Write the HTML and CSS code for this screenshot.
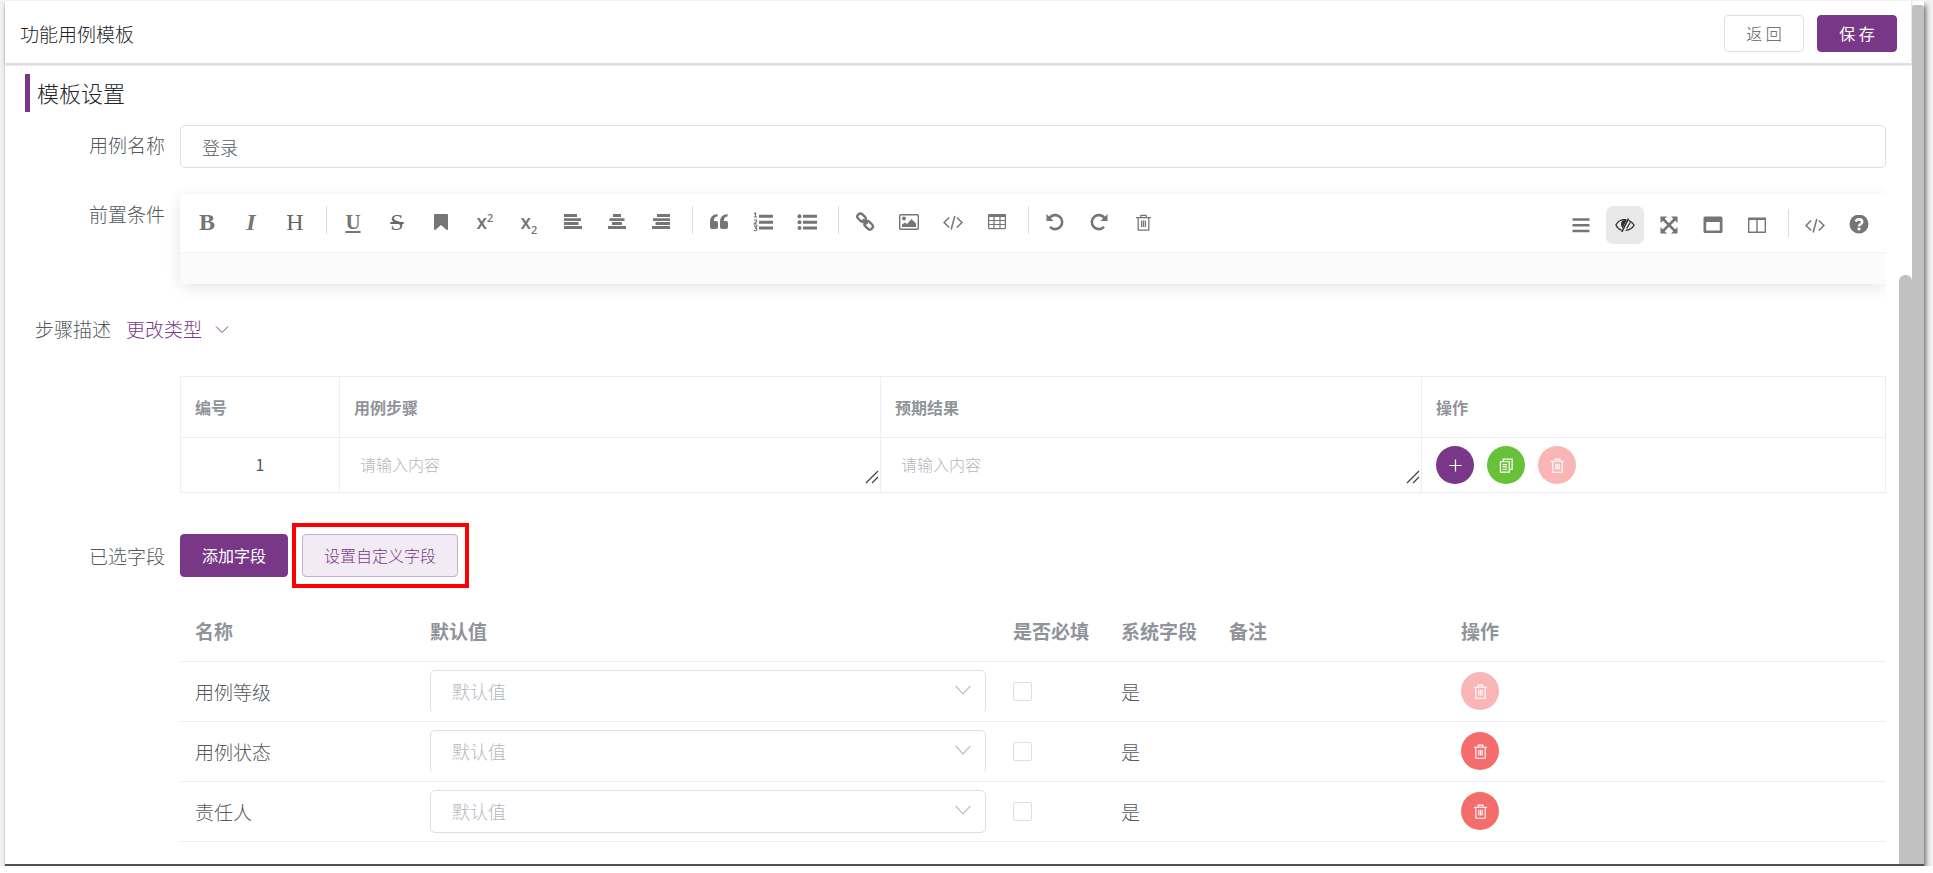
FILE: index.html
```html
<!DOCTYPE html>
<html lang="zh-CN">
<head>
<meta charset="utf-8">
<title>功能用例模板</title>
<link rel="stylesheet" href="styles.css">
</head>
<body>
<svg class="defs" aria-hidden="true">
  <symbol id="trash" viewBox="0 0 16 16"><path d="M1 3.500h14M5.500 3.500V1.200h5v2.300M3 3.500v11.700h10V3.500M6.200 6v6.200M8 6v6.200M9.800 6v6.200" fill="none" stroke="currentColor" stroke-width="1.200"/></symbol>
  <symbol id="chevron" viewBox="0 0 16 16"><path d="M1.500 4.500 8 11.500l6.500-7" fill="none" stroke="currentColor" stroke-width="1.200"/></symbol>
  <symbol id="chevron-flat" viewBox="0 0 16 16"><path d="M2 5.500 8 11.500l6-6" fill="none" stroke="currentColor" stroke-width="1"/></symbol>
  <symbol id="code" viewBox="0 0 20 20"><path d="M6.200 5.500 1 10.500l5.200 5M13.800 5.500l5.200 5-5.200 5M11.800 4 8.200 17.500" fill="none" stroke="currentColor" stroke-width="1.500"/></symbol>
  <symbol id="grip" viewBox="0 0 14 14"><path d="M1 13 13 1M7 13l6-6" fill="none" stroke="currentColor" stroke-width="1.300"/></symbol>
</svg>
<div class="window">
  <main class="page">
    <header class="topbar">
      <h1 class="topbar-title">功能用例模板</h1>
      <div class="topbar-actions">
        <button class="btn btn-plain btn-small" type="button">返 回</button>
        <button class="btn btn-primary btn-small" type="button">保 存</button>
      </div>
    </header>
    <div class="body">
      <form class="content">
        <h2 class="section-title">模板设置</h2>

        <div class="row">
          <label class="label" for="case-name">用例名称</label>
          <input class="text-input" id="case-name" type="text" value="登录">
        </div>

        <div class="row">
          <span class="label">前置条件</span>
          <div class="editor">
            <div class="toolbar">
              <div class="tools">
                <button class="tool glyph bold" type="button">B</button>
                <button class="tool glyph italic" type="button">I</button>
                <button class="tool glyph" type="button">H</button>
                <span class="divider"></span>
                <button class="tool glyph under" type="button">U</button>
                <button class="tool glyph strike" type="button">S</button>
                <button class="tool" type="button" aria-label="标记"><svg viewBox="0 0 20 20"><path d="M3 3q0-1 1-1h12q1 0 1 1v15l-1.500-.2L10 13l-5.500 4.800L3 18z" fill="currentColor"/></svg></button>
                <button class="tool script" type="button"><span>x<sup>2</sup></span></button>
                <button class="tool script" type="button"><span>x<sub>2</sub></span></button>
                <button class="tool" type="button" aria-label="左对齐"><svg viewBox="0 0 20 20"><path d="M1 3.500h13M1 7.700h17M1 11.500h14.500M1 15.500h18" stroke="currentColor" stroke-width="2.800"/></svg></button>
                <button class="tool" type="button" aria-label="居中"><svg viewBox="0 0 20 20"><path d="M6 3.500h8M2.500 7.700h15M5 11.500h10M1 15.500h18" stroke="currentColor" stroke-width="2.800"/></svg></button>
                <button class="tool" type="button" aria-label="右对齐"><svg viewBox="0 0 20 20"><path d="M6 3.500h13M2 7.700h17M4.500 11.500H19M1 15.500h18" stroke="currentColor" stroke-width="2.800"/></svg></button>
                <span class="divider"></span>
                <button class="tool" type="button" aria-label="引用"><svg viewBox="0 0 20 20"><path id="q" d="M8.500 2v2.500Q5 4.500 4.800 9H7q2 0 2 2v4q0 2-2 2H3q-2 0-2-2v-5Q1 2.500 8.500 2z" fill="currentColor"/><use href="#q" x="10"/></svg></button>
                <button class="tool" type="button" aria-label="有序列表"><svg viewBox="0 0 20 20"><path d="M6 4.200h14M6 10.200h14M6 16h14" stroke="currentColor" stroke-width="3"/><path d="M1 1.800 2.500 1v4M1 5h3M1 8h2.500v1.500L1 12h3M1 14.200h3l-1.500 2q2 .3 1 1.800-.8 1-2.500.4" fill="none" stroke="currentColor" stroke-width="1.200"/></svg></button>
                <button class="tool" type="button" aria-label="无序列表"><svg viewBox="0 0 20 20"><path d="M6 4.200h14M6 10.200h14M6 16h14" stroke="currentColor" stroke-width="3"/><g fill="currentColor"><circle cx="2.500" cy="4.200" r="2"/><circle cx="2.500" cy="10.200" r="2"/><circle cx="2.500" cy="16" r="2"/></g></svg></button>
                <span class="divider"></span>
                <button class="tool" type="button" aria-label="链接"><svg viewBox="0 0 20 20"><g fill="none" stroke="currentColor" stroke-width="2.400"><rect x="2" y="2.600" width="9" height="6" rx="2.800" transform="rotate(45 6.500 5.600)"/><rect x="9.200" y="10.400" width="9" height="6" rx="2.800" transform="rotate(45 13.700 13.400)"/><path d="m7.500 7.500 5 4.500"/></g></svg></button>
                <button class="tool" type="button" aria-label="图片"><svg viewBox="0 0 20 20"><rect x=".7" y="2.700" width="18.600" height="14.600" rx="1" fill="none" stroke="currentColor" stroke-width="1.400"/><circle cx="5" cy="6.500" r="1.900" fill="currentColor"/><path d="M3 15v-2.500l3-2 2 1.500 4.500-5 4.500 4.500V15z" fill="currentColor"/></svg></button>
                <button class="tool" type="button" aria-label="代码"><svg><use href="#code"/></svg></button>
                <button class="tool" type="button" aria-label="表格"><svg viewBox="0 0 20 20"><rect x="1.600" y="2.700" width="16.800" height="14" rx="1" fill="none" stroke="currentColor" stroke-width="1.300"/><path d="M1 2.500h18V5H1z" fill="currentColor"/><path d="M1.500 8.500h17M1.500 12.500h17M7 4v12.500M13 4v12.500" stroke="currentColor" stroke-width="1.200"/></svg></button>
                <span class="divider"></span>
                <button class="tool" type="button" aria-label="撤销"><svg viewBox="0 0 20 20"><path d="M4.500 6A7 7 0 1 1 5 14.800" fill="none" stroke="currentColor" stroke-width="2.600"/><path d="M1.500 2v7h7z" fill="currentColor"/></svg></button>
                <button class="tool" type="button" aria-label="重做"><svg viewBox="0 0 20 20"><path d="M15.500 6A7 7 0 1 0 15 14.800" fill="none" stroke="currentColor" stroke-width="2.600"/><path d="M18.500 2v7h-7z" fill="currentColor"/></svg></button>
                <button class="tool" type="button" aria-label="清空"><svg class="i16"><use href="#trash"/></svg></button>
              </div>
              <div class="tools tools-right">
                <button class="tool" type="button" aria-label="目录"><svg viewBox="0 0 20 20"><path d="M1.500 4.500h17M1.500 10.200h17M1.500 16h17" stroke="currentColor" stroke-width="2.600"/></svg></button>
                <button class="tool active" type="button" aria-label="预览"><svg viewBox="0 0 20 20"><path d="M11 4.700Q4 4 .9 10q2 4 5.500 5.200M13.500 5.300Q17 6.500 19.100 10q-2.600 5-8.500 5.300M15.300 7.500l-3.600 6" fill="none" stroke="currentColor" stroke-width="1.300"/><path d="M13.500 3.500 6.800 17" stroke="currentColor" stroke-width="1.600"/><path d="M12 4.500 7.500 13.500Q4.500 9 7.500 5.500z" fill="currentColor"/></svg></button>
                <button class="tool" type="button" aria-label="全屏"><svg viewBox="0 0 20 20"><path d="m4 4 12 12M16 4 4 16" stroke="currentColor" stroke-width="2.600"/><path d="M1.500 1.500H8l-6.500 6.500zM18.500 1.500V8L12 1.500zM1.500 18.500V12L8 18.500zM18.500 18.500H12l6.500-6.500z" fill="currentColor"/></svg></button>
                <button class="tool" type="button" aria-label="阅读"><svg viewBox="0 0 20 20"><path fill-rule="evenodd" d="M2 1.500h16q1.500 0 1.500 1.500v13.500q0 1.500-1.500 1.500H2Q.5 18 .5 16.500V3Q.5 1.500 2 1.500zM3.200 7v8.500h13.600V7z" fill="currentColor"/></svg></button>
                <button class="tool" type="button" aria-label="双栏"><svg viewBox="0 0 20 20"><path d="M1.700 4v13.200h16.600V4M10 4v13" fill="none" stroke="currentColor" stroke-width="1.400"/><path d="M1 2.500h18V5H1z" fill="currentColor"/></svg></button>
                <span class="divider"></span>
                <button class="tool" type="button" aria-label="源码"><svg><use href="#code"/></svg></button>
                <button class="tool" type="button" aria-label="帮助"><svg viewBox="0 0 20 20"><circle cx="10" cy="9" r="9.500" fill="currentColor"/><path d="M6.700 6.500Q7.500 4.300 10 4.300q3.200.1 3.200 2.700 0 1.300-1.700 2.300-1.500.9-1.500 2" fill="none" stroke="#fff" stroke-width="2.500"/><path d="M8.600 12.600h2.800v2.700H8.600z" fill="#fff"/></svg></button>
              </div>
            </div>
            <div class="editor-area"></div>
          </div>
        </div>

        <div class="step-type">
          <span>步骤描述</span>
          <a class="type-link" href="#type">更改类型 <svg><use href="#chevron-flat"/></svg></a>
        </div>

        <table class="steps">
          <thead><tr><th class="col-no">编号</th><th class="col-text">用例步骤</th><th class="col-text">预期结果</th><th>操作</th></tr></thead>
          <tbody><tr>
            <td class="no">1</td>
            <td><div class="area"><textarea rows="1" placeholder="请输入内容" aria-label="用例步骤"></textarea><svg><use href="#grip"/></svg></div></td>
            <td><div class="area"><textarea rows="1" placeholder="请输入内容" aria-label="预期结果"></textarea><svg><use href="#grip"/></svg></div></td>
            <td><div class="ops">
              <button class="circle add" type="button" aria-label="添加"><svg viewBox="0 0 16 16"><path d="M8 1.500v13M1.500 8h13" stroke="currentColor" stroke-width="1.300"/></svg></button>
              <button class="circle copy" type="button" aria-label="复制"><svg viewBox="0 0 16 16"><path d="M1.500 4h9.500v11H1.500zM4.500 4V1.200H14v11H11M3.800 7h5M3.800 9.500h5M3.800 12h5" fill="none" stroke="currentColor" stroke-width="1.300"/></svg></button>
              <button class="circle delete" type="button" aria-label="删除" disabled><svg><use href="#trash"/></svg></button>
            </div></td>
          </tr></tbody>
        </table>

        <div class="row chosen">
          <span class="label">已选字段</span>
          <button class="btn btn-primary" type="button">添加字段</button>
          <div class="highlight"><button class="btn btn-soft" type="button">设置自定义字段</button></div>
        </div>

        <table class="fields">
          <thead><tr><th class="w-name">名称</th><th class="w-value">默认值</th><th class="w-flag">是否必填</th><th class="w-flag">系统字段</th><th class="w-note">备注</th><th>操作</th></tr></thead>
          <tbody>
            <tr><td>用例等级</td><td><div class="select open"><select aria-label="用例等级默认值"><option>默认值</option></select><svg><use href="#chevron"/></svg></div></td><td><input class="check" type="checkbox" aria-label="用例等级必填"></td><td>是</td><td></td><td><button class="circle delete" type="button" aria-label="删除" disabled><svg><use href="#trash"/></svg></button></td></tr>
            <tr><td>用例状态</td><td><div class="select open"><select aria-label="用例状态默认值"><option>默认值</option></select><svg><use href="#chevron"/></svg></div></td><td><input class="check" type="checkbox" aria-label="用例状态必填"></td><td>是</td><td></td><td><button class="circle delete" type="button" aria-label="删除"><svg><use href="#trash"/></svg></button></td></tr>
            <tr><td>责任人</td><td><div class="select"><select aria-label="责任人默认值"><option>默认值</option></select><svg><use href="#chevron"/></svg></div></td><td><input class="check" type="checkbox" aria-label="责任人必填"></td><td>是</td><td></td><td><button class="circle delete" type="button" aria-label="删除"><svg><use href="#trash"/></svg></button></td></tr>
          </tbody>
        </table>
      </form>
      <div class="thumb-inner"></div>
    </div>
  </main>
  <div class="thumb-outer"></div>
</div>
</body>
</html>
```
FILE: styles.css
```css
* { box-sizing: border-box; }

body {
  margin: 0;
  min-height: 100vh;
  display: flex;
  flex-direction: column;
  padding: 0 9px 7px 5px;
  background: #fff;
  border-top: 1px solid #f2f2f2;
  color: #56585c;
  font-family: "Noto Sans CJK SC", sans-serif;
  font-size: 19px;
  font-weight: 300;
}

button, input, select, textarea { font: inherit; color: inherit; margin: 0; }
button { cursor: pointer; padding: 0; }
h1, h2 { margin: 0; font-weight: 300; color: #222326; }
svg { display: block; flex: none; }
.defs { position: absolute; width: 0; height: 0; }

.window {
  flex: 1;
  display: flex;
  background: #fff;
  border-bottom: 2px solid #505052;
  box-shadow: 2px 4px 5px rgba(0, 0, 0, .55), 0 6px 0 9px #f2f2f2;
  clip-path: inset(0 -9px 0 -5px);
}
.page { flex: 1; min-width: 0; display: flex; flex-direction: column; }
.thumb-outer { width: 12px; margin-top: 4px; background: #c1c1c1; border-radius: 3px 3px 0 0; }
.thumb-inner { width: 13px; flex: none; margin-top: 211px; background: #c1c1c1; border-radius: 6px 6px 0 0; }

.topbar {
  display: flex;
  align-items: center;
  justify-content: space-between;
  height: 63px;
  padding: 4px 14px 0 15px;
  border-right: 1px solid #e4e7ed;
  border-bottom: 1px solid #dcdfe6;
  box-shadow: 0 1px 2px rgba(0, 0, 0, .2);
}
.topbar-title { font-size: 19px; padding-bottom: 2px; }
.topbar-actions { display: flex; gap: 13px; padding-bottom: 2px; }

.btn {
  height: 43px;
  padding: 0 21px 1px;
  border: 1px solid #dcdfe6;
  border-radius: 4px;
  font-size: 16px;
  background: #fff;
}
.btn-small { width: 80px; height: 37px; padding: 0; }
.btn-primary { background: #783887; border-color: #783887; color: #fff; font-weight: 400; }
.btn-soft { background: #f2ebf3; border-color: #c9afcf; color: #783887; }

.body { flex: 1; display: flex; }
.content { flex: 1; min-width: 0; padding: 10px 13px 0 20px; }

.section-title {
  height: 38px;
  border-left: 5px solid #783887;
  padding-left: 7px;
  font-size: 22px;
  line-height: 36px;
  margin-bottom: 13px;
}

.row { display: flex; margin-bottom: 26px; }
.label { flex: none; width: 155px; padding-right: 15px; text-align: right; line-height: 40px; }
.text-input {
  flex: 1;
  height: 43px;
  padding: 0 21px;
  border: 1px solid #dcdfe6;
  border-radius: 5px;
  font-size: 18px;
  background: #fff;
}

.editor {
  flex: 1;
  min-width: 0;
  border-radius: 5px;
  box-shadow: 0 3px 16px rgba(0, 0, 0, .11);
  clip-path: inset(-20px 0 -20px -20px);
}
.toolbar {
  display: flex;
  justify-content: space-between;
  align-items: flex-start;
  height: 59px;
  padding: 9px 8px 0;
  background: #fff;
  border-bottom: 1px solid #f2f2fa;
  border-radius: 5px 5px 0 0;
}
.editor-area { height: 31px; background: #fbfbfb; }
.tools { display: flex; gap: 6px; }
.tools-right { padding-top: 3px; }
.tool {
  width: 38px;
  height: 38px;
  display: flex;
  align-items: center;
  justify-content: center;
  border: 0;
  border-radius: 7px;
  background: none;
  color: #757575;
}
.tool svg { width: 20px; height: 20px; }
.tool .i16 { width: 17px; height: 17px; }
.tool.active { background: #e9e9e9; color: #303030; }
.glyph { font-family: "Liberation Serif", serif; font-size: 24px; font-weight: 400; color: #666; }
.bold, .italic, .under { font-weight: 700; color: #757575; }
.italic { font-style: italic; }
.under { font-size: 21px; text-decoration: underline; }
.strike { text-decoration: line-through; }
.script { font-family: "Open Sans", sans-serif; font-size: 19px; font-weight: 600; line-height: 20px; }
.script sup, .script sub { font-size: 11px; line-height: 0; }
.divider { width: 1px; height: 28px; margin: 3px 1px 0 6px; background: #ddd; }

.step-type { display: flex; gap: 15px; padding-left: 10px; line-height: 38px; margin-bottom: 28px; }
.type-link { display: flex; align-items: center; gap: 12px; color: #783887; text-decoration: none; }
.type-link svg { width: 16px; height: 16px; }

table { width: calc(100% - 155px); margin-left: 155px; table-layout: fixed; border-collapse: collapse; }
th { text-align: left; font-weight: 700; color: #909399; }
th, td { padding: 0 12px 0 15px; }

.steps { font-size: 16px; margin-bottom: 30px; }
.steps th, .steps td { border: 1px solid #ebeef5; }
.steps th { height: 61px; padding-left: 14px; }
.steps td { height: 55px; padding-left: 14px; }
.steps .col-no { width: 159px; }
.steps .col-text { width: 541px; }
.steps .no { text-align: center; font-weight: 400; padding: 0 0 2px; }
.steps td:nth-child(2), .steps td:nth-child(3) { padding: 0; }
.area { position: relative; display: flex; }
.area textarea {
  width: 100%;
  height: 46px;
  padding: 10px 20px;
  border: 0;
  resize: none;
  line-height: 24px;
  background: none;
}
.area svg { position: absolute; right: 1px; bottom: 4px; width: 14px; height: 14px; color: #444; }
textarea::placeholder { color: #b4b8c0; }
.ops { display: flex; gap: 13px; }

.circle {
  width: 38px;
  height: 38px;
  display: flex;
  align-items: center;
  justify-content: center;
  border: 0;
  border-radius: 50%;
  color: #fff;
}
.circle svg { width: 15px; height: 15px; }
.add { background: #783887; }
.copy { background: #67c23a; }
.delete { background: #f56c6c; }
.delete:disabled { background: #fab6b6; }

.chosen { align-items: center; margin-bottom: 13px; }
.highlight { display: flex; margin-left: 4px; padding: 7px 7px 7px 6px; border: 4px solid #f00; }

.fields th { height: 60px; border-bottom: 1px solid #ebeef5; }
.fields td { height: 60px; border-bottom: 1px solid #ebeef5; }
.w-name { width: 235px; }
.w-value { width: 583px; }
.w-flag { width: 108px; white-space: nowrap; }
.w-note { width: 232px; }
.select { position: relative; display: flex; }
.select select {
  appearance: none;
  width: 100%;
  height: 43px;
  padding: 0 21px 1px;
  border: 1px solid #dcdfe6;
  border-radius: 5px;
  background: #fff;
  color: #b4b8c0;
  font-size: 18px;
}
.select.open select { border-bottom-color: transparent; }
.select svg { position: absolute; right: 14px; top: 11px; width: 18px; height: 18px; color: #c0c4cc; }
.check {
  appearance: none;
  display: block;
  width: 19px;
  height: 19px;
  border: 1px solid #dcdfe6;
  border-radius: 2px;
  background: #fff;
}
```
